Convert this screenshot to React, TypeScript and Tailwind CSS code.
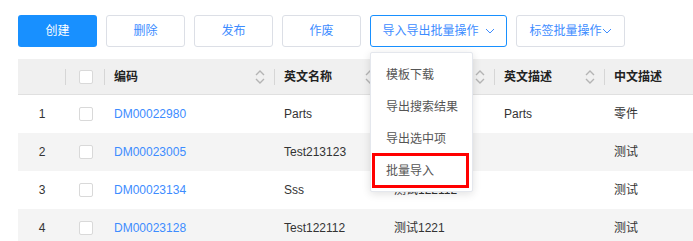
import React from "react";

const FONT = {
	fontFamily: '"Liberation Sans", "Noto Sans CJK SC", sans-serif',
};

function SortIcon() {
	return (
		<svg width="10" height="16" viewBox="0 0 10 16" className="shrink-0">
			<polyline points="1,6 5,2 9,6" fill="none" stroke="#b4b4b4" strokeWidth="1.4" />
			<polyline points="1,10 5,14 9,10" fill="none" stroke="#b4b4b4" strokeWidth="1.4" />
		</svg>
	);
}

function Chevron() {
	return (
		<svg width="10" height="6" viewBox="0 0 10 6" className="shrink-0">
			<polyline points="1,1 5,5 9,1" fill="none" stroke="currentColor" strokeWidth="1" />
		</svg>
	);
}

function Checkbox() {
	return <div className="w-[14px] h-[14px] border border-[#d9d9d9] rounded-[2px] bg-white" />;
}

function Divider() {
	return <div className="w-px h-[16px] bg-[#d6d6d6]" />;
}

// 中文名称 cells sit under the open dropdown; only row 3 peeks out below it
const rows = [
	{ idx: 1, code: "DM00022980", en: "Parts", cn: "", enDesc: "Parts", cnDesc: "零件" },
	{ idx: 2, code: "DM00023005", en: "Test213123", cn: "", enDesc: "", cnDesc: "测试" },
	{ idx: 3, code: "DM00023134", en: "Sss", cn: "测试122112", enDesc: "", cnDesc: "测试" },
	{ idx: 4, code: "DM00023128", en: "Test122112", cn: "测试1221", enDesc: "", cnDesc: "测试" },
];

const headers = [
	{ label: "编码", width: "w-[170px]" },
	{ label: "英文名称", width: "w-[110px]" },
	{ label: "", width: "w-[110px]" },
	{ label: "英文描述", width: "w-[110px]" },
];

const menuItems = ["模板下载", "导出搜索结果", "导出选中项", "批量导入"];

export default function App() {
	return (
		<div className="w-[693px] h-[241px] overflow-hidden bg-white pl-[18px] pt-[15px]" style={FONT}>
			<div className="flex gap-[9px] text-[12px]">
				<button className="w-[79px] h-[32px] rounded-[3px] bg-[#1890ff] text-white">创建</button>
				<button className="w-[79px] h-[32px] rounded-[3px] border border-[#dcdfe6] text-[#3d8cff]">删除</button>
				<button className="w-[79px] h-[32px] rounded-[3px] border border-[#dcdfe6] text-[#3d8cff]">发布</button>
				<button className="w-[79px] h-[32px] rounded-[3px] border border-[#dcdfe6] text-[#3d8cff]">作废</button>
				<div className="relative">
					<button className="w-[137px] h-[32px] rounded-[3px] border border-[#1890ff] text-[#3d8cff] flex items-center justify-center gap-[6px]">
						导入导出批量操作
						<Chevron />
					</button>
					<div className="absolute left-0 top-[37px] z-10 w-[103px] h-[140px] bg-white border border-[#e4e7ed] rounded-[2px] shadow-[0_2px_8px_rgba(0,0,0,0.12)] pt-[6px] text-[12px] text-[#555]">
						{menuItems.map((item, i) => (
							<div key={item} className="relative h-[32px] flex items-center pl-[15px]">
								{item}
								{i === 3 && (
									<div className="absolute left-[1px] top-[-2px] w-[97px] h-[35px] border-[3px] border-[#ff0000]" />
								)}
							</div>
						))}
					</div>
				</div>
				<button className="w-[109px] h-[32px] rounded-[3px] border border-[#dcdfe6] text-[#3d8cff] flex items-center justify-center">
					标签批量操作
					<Chevron />
				</button>
			</div>

			<div className="mt-[12px] w-[700px] text-[12px] text-[#333]">
				<div className="flex items-center h-[36px] bg-[#f0f0f0] border-b border-[#e0e0e0] font-bold text-[#222]">
					<div className="w-[48px] h-full flex items-center justify-end">
						<Divider />
					</div>
					<div className="w-[39px] h-full flex items-center justify-center relative">
						<Checkbox />
						<div className="absolute right-0">
							<Divider />
						</div>
					</div>
					{headers.map((h, i) => (
						<div key={i} className={`${h.width} h-full flex items-center pl-[9px]`}>
							<span className="flex-1">{h.label}</span>
							<SortIcon />
							<div className="ml-[9px]">
								<Divider />
							</div>
						</div>
					))}
					<div className="flex-1 h-full flex items-center pl-[9px]">中文描述</div>
				</div>
				{rows.map((r) => (
					<div key={r.idx} className={`flex items-center h-[38px] ${r.idx % 2 === 0 ? "bg-[#f4f4f4]" : "bg-white"}`}>
						<div className="w-[48px] text-center">{r.idx}</div>
						<div className="w-[39px] flex justify-center">
							<Checkbox />
						</div>
						<div className="w-[170px] pl-[9px] text-[#3d8cff]">{r.code}</div>
						<div className="w-[110px] pl-[9px]">{r.en}</div>
						<div className="w-[110px] pl-[9px]">{r.cn}</div>
						<div className="w-[110px] pl-[9px]">{r.enDesc}</div>
						<div className="flex-1 pl-[9px]">{r.cnDesc}</div>
					</div>
				))}
			</div>
		</div>
	);
}
